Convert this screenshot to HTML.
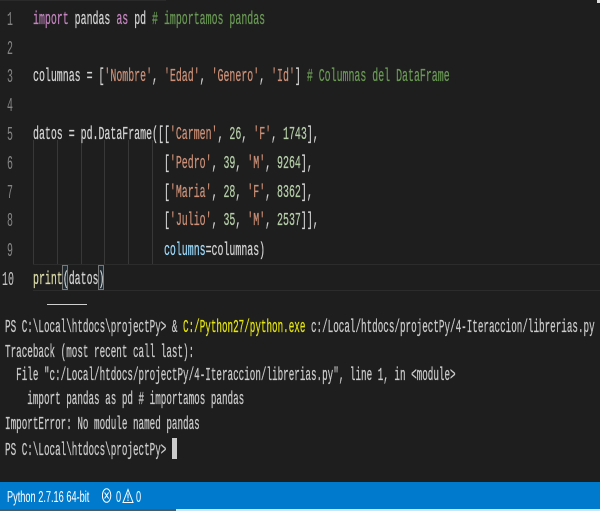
<!DOCTYPE html>
<html>
<head>
<meta charset="utf-8">
<style>
html,body{margin:0;padding:0;background:#1e1e1e;}
#r{position:relative;width:600px;height:511px;overflow:hidden;background:#1e1e1e;font-family:"Liberation Mono",monospace;}
.l{position:absolute;white-space:pre;font-size:18px;line-height:20px;height:20px;transform-origin:0 50%;color:#d4d4d4;filter:blur(.35px);-webkit-text-stroke:.25px currentColor;}
.e{left:33px;transform:scaleX(.551);}
.t{left:5px;transform:scaleX(.515);color:#cccccc;}
.n{font-size:19px;line-height:20px;position:absolute;color:#858585;transform-origin:0 50%;transform:scaleX(.522);filter:blur(.35px);}
.k{color:#c586c0}.c{color:#6a9955}.s{color:#ce9178}.d{color:#b5cea8}.p{color:#9cdcfe}.f{color:#dcdcaa}.y{color:#e5e510}
.g{position:absolute;width:1px;top:140px;height:124px;background:#383838;}
.b{position:absolute;background:#1e1e1e;}
.st{position:absolute;top:488px;height:20px;white-space:pre;font:16px/20px 'Liberation Sans',sans-serif;color:#fff;transform-origin:0 50%;transform:scaleX(.575)}
</style>
</head>
<body>
<div id="r">
<div class="b" style="left:0;top:0;width:166px;height:1px;background:#2a2a2a"></div>
<div class="b" style="left:597px;top:0;width:3px;height:3px;background:#ddd"></div>

<div class="g" style="left:33px"></div>
<div class="g" style="left:57px"></div>
<div class="g" style="left:81px"></div>
<div class="g" style="left:104px"></div>
<div class="g" style="left:128px"></div>
<div class="g" style="left:152px"></div>

<div class="b" style="left:33px;top:264px;width:567px;height:27px;box-sizing:border-box;border-top:1px solid #2c2c2c;border-bottom:1px solid #2c2c2c"></div>
<div class="b" style="left:62px;top:265px;width:6px;height:25px;box-sizing:border-box;border:1px solid #777;background:#1e2a30"></div>
<div class="b" style="left:98px;top:265px;width:6px;height:25px;box-sizing:border-box;border:1px solid #777;background:#1e2a30"></div>

<div class="n" style="left:7px;top:10px">1</div>
<div class="n" style="left:7px;top:39px">2</div>
<div class="n" style="left:7px;top:67px">3</div>
<div class="n" style="left:7px;top:96px">4</div>
<div class="n" style="left:7px;top:125px">5</div>
<div class="n" style="left:7px;top:154px">6</div>
<div class="n" style="left:7px;top:183px">7</div>
<div class="n" style="left:7px;top:211px">8</div>
<div class="n" style="left:7px;top:241px">9</div>
<div class="n" style="left:2px;top:270px;color:#c6c6c6">10</div>

<div class="l e" style="top:10px"><span class="k">import</span> pandas <span class="k">as</span> pd <span class="c"># importamos pandas</span></div>
<div class="l e" style="top:67px">columnas = [<span class="s">'Nombre'</span>, <span class="s">'Edad'</span>, <span class="s">'Genero'</span>, <span class="s">'Id'</span>] <span class="c"># Columnas del DataFrame</span></div>
<div class="l e" style="top:125px">datos = pd.DataFrame([[<span class="s">'Carmen'</span>, <span class="d">26</span>, <span class="s">'F'</span>, <span class="d">1743</span>],</div>
<div class="l e" style="top:154px">                      [<span class="s">'Pedro'</span>, <span class="d">39</span>, <span class="s">'M'</span>, <span class="d">9264</span>],</div>
<div class="l e" style="top:183px">                      [<span class="s">'Maria'</span>, <span class="d">28</span>, <span class="s">'F'</span>, <span class="d">8362</span>],</div>
<div class="l e" style="top:211px">                      [<span class="s">'Julio'</span>, <span class="d">35</span>, <span class="s">'M'</span>, <span class="d">2537</span>]],</div>
<div class="l e" style="top:241px">                      <span class="p">columns</span>=columnas)</div>
<div class="l e" style="top:270px"><span class="f">print</span>(datos)</div>

<div class="b" style="left:47px;top:304px;width:40px;height:1px;background:#cfcfcf"></div>

<div class="l t" style="top:318px">PS C:\Local\htdocs\projectPy&gt; &amp; <span class="y">C:/Python27/python.exe</span> c:/Local/htdocs/projectPy/4-Iteraccion/librerias.py</div>
<div class="l t" style="top:343px">Traceback (most recent call last):</div>
<div class="l t" style="top:366px">  File "c:/Local/htdocs/projectPy/4-Iteraccion/librerias.py", line 1, in &lt;module&gt;</div>
<div class="l t" style="top:390px">    import pandas as pd # importamos pandas</div>
<div class="l t" style="top:415px">ImportError: No module named pandas</div>
<div class="l t" style="top:441px">PS C:\Local\htdocs\projectPy&gt;</div>
<div class="b" style="left:172px;top:438px;width:5px;height:21px;background:#cccccc"></div>

<div class="b" style="left:0;top:482px;width:600px;height:27px;background:#007acc"></div>
<div class="b" style="left:0;top:509px;width:600px;height:2px;background:#cfe6f5"></div>
<div class="b" style="left:0;top:509px;width:176px;height:2px;background:#4a5a66"></div>
<div class="st" style="left:7px">Python 2.7.16 64-bit</div>
<svg style="position:absolute;left:102px;top:488px" width="40" height="17" viewBox="0 0 40 17">
<ellipse cx="4.6" cy="7.5" rx="4.2" ry="6.8" fill="none" stroke="#fff" stroke-width="1"/>
<path d="M2.6 4.5L6.6 10.5M6.6 4.5L2.6 10.5" stroke="#fff" stroke-width="1" fill="none"/>
<path d="M26 1.5L31 14.5H21Z" fill="none" stroke="#fff" stroke-width="1"/>
<path d="M26 5.5V10.5M26 11.5V13" stroke="#fff" stroke-width="1" fill="none"/>
</svg>
<div class="st" style="left:116px">0</div>
<div class="st" style="left:136px">0</div>
</div>
</body>
</html>
